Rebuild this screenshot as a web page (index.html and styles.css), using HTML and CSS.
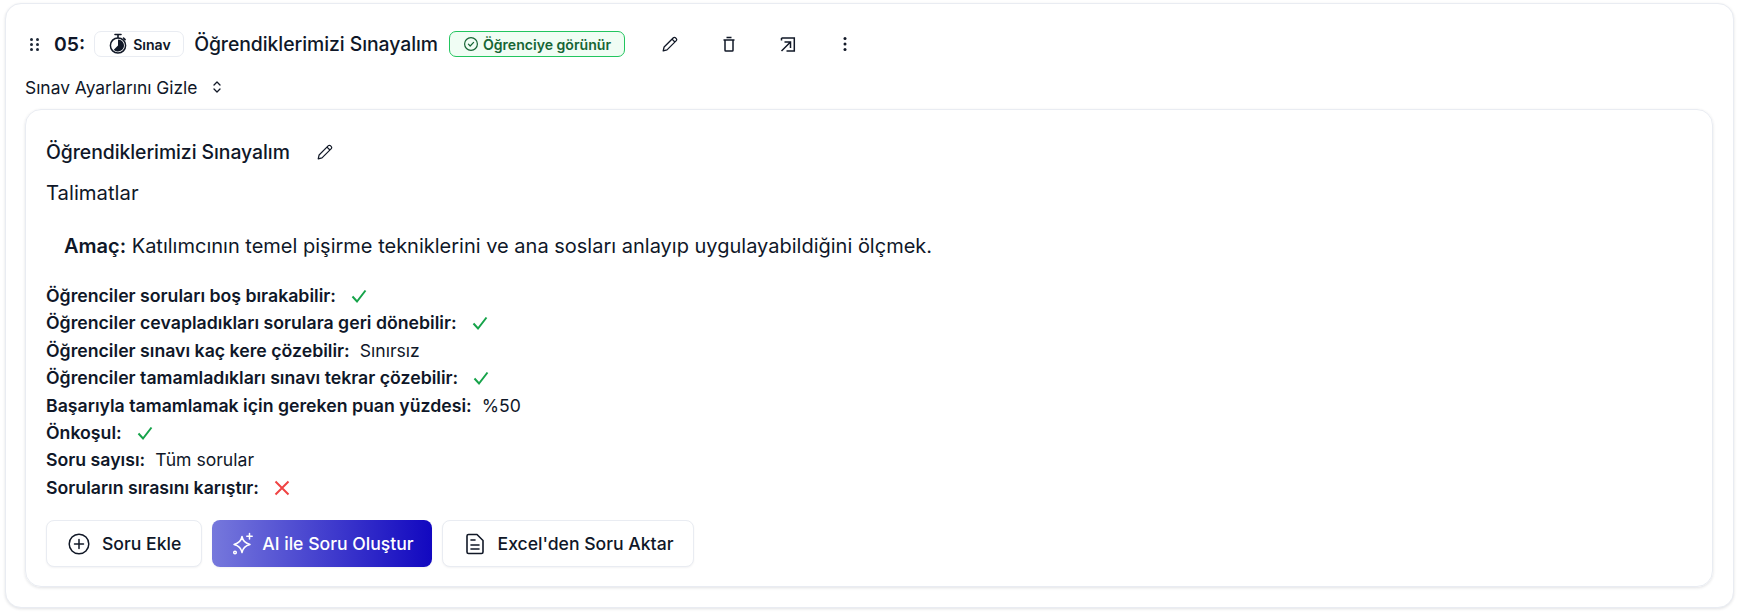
FILE: index.html
```html
<!DOCTYPE html>
<html lang="tr">
<head>
  <meta charset="UTF-8">
  <meta name="viewport" content="width=device-width, initial-scale=1.0">
  <title>Sınav</title>
  <link rel="stylesheet" href="styles.css">
</head>
<body>
  <section class="section-card">
    <div class="section-head">
      <svg class="drag" width="9" height="13" viewBox="0 0 9 13"><g fill="#1f2937"><circle cx="1.500" cy="1.500" r="1.500"/><circle cx="7.500" cy="1.500" r="1.500"/><circle cx="1.500" cy="6.500" r="1.500"/><circle cx="7.500" cy="6.500" r="1.500"/><circle cx="1.500" cy="11.500" r="1.500"/><circle cx="7.500" cy="11.500" r="1.500"/></g></svg>
      <span class="section-no">05:</span>
      <span class="type-badge">
        <svg width="20" height="22" viewBox="0 0 20 22"><path d="M7 1.500h6M10 1.500v3" stroke="#111827" stroke-width="1.600" fill="none" stroke-linecap="round"/><path d="M15.500 5l1.600 1.600" stroke="#111827" stroke-width="1.600" stroke-linecap="round"/><circle cx="10" cy="12.500" r="7.600" fill="none" stroke="#111827" stroke-width="1.500"/><path d="M10 12.500V6.500A6 6 0 1 1 5.800 16.800Z" fill="#111827"/></svg>
        Sınav
      </span>
      <h2 class="section-title">Öğrendiklerimizi Sınayalım</h2>
      <span class="visible-badge">
        <svg width="16" height="16" viewBox="0 0 16 16" fill="none" stroke="#166534" stroke-width="1.200" stroke-linecap="round" stroke-linejoin="round"><circle cx="8" cy="8" r="6.400"/><path d="M5.400 8.200l1.800 1.800 3.400-3.600"/></svg>
        Öğrenciye görünür
      </span>
      <div class="head-actions">
        <svg width="18" height="18" viewBox="0 0 18 18" fill="none" stroke="#111827" stroke-width="1.300" stroke-linejoin="round"><path d="M2.200 15.800l.9-3.800L12.400 2.700a1.400 1.400 0 0 1 2 0l.9.9a1.400 1.400 0 0 1 0 2L6 14.900z"/><path d="M11 4.100l2.900 2.900"/></svg>
        <svg width="18" height="18" viewBox="0 0 18 18" fill="none" stroke="#111827" stroke-width="1.500"><path d="M3.500 5h11M6.500 2.500h5"/><path d="M5 5v10.200c0 .5.3.8.8.8h6.400c.5 0 .8-.3.8-.8V5"/></svg>
        <svg width="18" height="18" viewBox="0 0 18 18" fill="none" stroke="#111827" stroke-width="1.500"><path d="M2.500 3h12.800v13H7.500"/><path d="M2.500 3v2.500M2.500 16l8.500-8.500M5.500 7h6v6"/></svg>
        <svg class="more" width="18" height="18" viewBox="0 0 18 18" fill="#111827"><circle cx="9" cy="3.500" r="1.500"/><circle cx="9" cy="9" r="1.500"/><circle cx="9" cy="14.500" r="1.500"/></svg>
      </div>
    </div>

    <div class="settings-toggle">
      Sınav Ayarlarını Gizle
      <svg width="12" height="14" viewBox="0 0 12 14" fill="none" stroke="#111827" stroke-width="1.300" stroke-linecap="round" stroke-linejoin="round"><path d="M3 5l3-3 3 3M3 9l3 3 3-3"/></svg>
    </div>

    <div class="settings-card">
      <div class="quiz-title">
        <h3>Öğrendiklerimizi Sınayalım</h3>
        <svg width="18" height="18" viewBox="0 0 18 18" fill="none" stroke="#111827" stroke-width="1.200" stroke-linejoin="round"><path d="M2.200 15.800l.9-3.800L12.400 2.700a1.400 1.400 0 0 1 2 0l.9.9a1.400 1.400 0 0 1 0 2L6 14.900z"/><path d="M11 4.100l2.900 2.900"/></svg>
      </div>
      <div class="instructions-label">Talimatlar</div>
      <p class="instructions"><strong>Amaç:</strong> Katılımcının temel pişirme tekniklerini ve ana sosları anlayıp uygulayabildiğini ölçmek.</p>

      <ul class="rules">
        <li><b>Öğrenciler soruları boş bırakabilir:</b><svg class="ok" width="18" height="18" viewBox="0 0 18 18"><path d="M2.500 9.500l4.500 5L15.500 3.500"/></svg></li>
        <li><b>Öğrenciler cevapladıkları sorulara geri dönebilir:</b><svg class="ok" width="18" height="18" viewBox="0 0 18 18"><path d="M2.500 9.500l4.500 5L15.500 3.500"/></svg></li>
        <li><b>Öğrenciler sınavı kaç kere çözebilir:</b><span>Sınırsız</span></li>
        <li><b>Öğrenciler tamamladıkları sınavı tekrar çözebilir:</b><svg class="ok" width="18" height="18" viewBox="0 0 18 18"><path d="M2.500 9.500l4.500 5L15.500 3.500"/></svg></li>
        <li><b>Başarıyla tamamlamak için gereken puan yüzdesi:</b><span>%50</span></li>
        <li><b>Önkoşul:</b><svg class="ok" width="18" height="18" viewBox="0 0 18 18"><path d="M2.500 9.500l4.500 5L15.500 3.500"/></svg></li>
        <li><b>Soru sayısı:</b><span>Tüm sorular</span></li>
        <li><b>Soruların sırasını karıştır:</b><svg class="no" width="18" height="18" viewBox="0 0 18 18"><path d="M2.500 2.500l13 13M15.500 2.500l-13 13"/></svg></li>
      </ul>

      <div class="actions">
        <button class="btn">
          <svg width="24" height="24" viewBox="0 0 24 24" fill="none" stroke="#111827" stroke-width="1.500" stroke-linecap="round"><circle cx="12" cy="12" r="9.800"/><path d="M12 7.500v9M7.500 12h9"/></svg>
          Soru Ekle
        </button>
        <button class="btn btn-ai">
          <svg width="22" height="24" viewBox="0 0 22 24" fill="none" stroke="#fff" stroke-width="1.500" stroke-linecap="round" stroke-linejoin="round"><path d="M10 4.500C10.800 9 13 11.200 18 12.500 13 13.800 10.800 16 10 20.500 9.200 16 7 13.800 2 12.500 7 11.200 9.200 9 10 4.500z"/><path d="M17.500 1.500v5.500M14.800 4.200h5.400"/><circle cx="3" cy="20.500" r="1.300"/></svg>
          AI ile Soru Oluştur
        </button>
        <button class="btn btn-excel">
          <svg width="20" height="24" viewBox="0 0 20 24" fill="none" stroke="#111827" stroke-width="1.600" stroke-linecap="round" stroke-linejoin="round"><path d="M3.500 2.500h8.500l6 6v11.500a1.500 1.500 0 0 1-1.500 1.500h-13a1.500 1.500 0 0 1-1.500-1.500v-16a1.500 1.500 0 0 1 1.500-1.500z"/><path d="M6 8h4M6 13h8M6 17h8"/></svg>
          Excel'den Soru Aktar
        </button>
      </div>
    </div>
  </section>
</body>
</html>
```

FILE: styles.css
```css
* {
  box-sizing: border-box;
}

html, body {
  height: 100%;
}

body {
  margin: 0;
  background-color: #fff;
  color: #0f1728;
  font-family: Inter, "Liberation Sans", sans-serif;
  overflow: hidden;
}

.section-card {
  margin: 3px 5px 0 5px;
  width: 1729px;
  height: 605px;
  padding: 27px 20px 0 19px;
  background-color: #fff;
  border: 1px solid #e9ecf2;
  border-radius: 16px;
  box-shadow: 0 1px 3px rgba(16, 24, 40, 0.12);
}

.section-head {
  display: flex;
  align-items: center;
  height: 26px;
  padding-left: 5px;
}

.drag {
  margin-right: 15px;
}

.section-no {
  font-size: 19.36px;
  font-weight: 600;
  margin-right: 9px;
}

.type-badge {
  display: inline-flex;
  align-items: center;
  gap: 5px;
  flex: none;
  width: 90px;
  height: 26px;
  padding-left: 13px;
  font-size: 14.08px;
  font-weight: 600;
  border: 1px solid #e9ecf2;
  border-radius: 7px;
  margin-right: 10px;
}

.section-title {
  margin: 0 11px 0 0;
  font-size: 19.36px;
  font-weight: 550;
  letter-spacing: -0.05px;
}

.visible-badge {
  display: inline-flex;
  align-items: center;
  gap: 4px;
  flex: none;
  width: 176px;
  height: 26px;
  padding-left: 13px;
  font-size: 14.08px;
  font-weight: 600;
  color: #166534;
  background-color: #f0fdf4;
  border: 1px solid #22c55e;
  border-radius: 7px;
}

.head-actions {
  display: flex;
  gap: 41px;
  margin-left: 36px;
}

.more {
  margin-left: -2px;
}

.settings-toggle {
  display: flex;
  align-items: center;
  gap: 14px;
  height: 24px;
  margin-top: 18px;
  font-size: 17.4px;
}

.settings-card {
  height: 478px;
  margin-top: 10px;
  padding: 28px 20px 0 20px;
  border: 1px solid #e9ecf2;
  border-radius: 16px;
  box-shadow: 0 1px 3px rgba(16, 24, 40, 0.12);
}

.quiz-title {
  display: flex;
  align-items: center;
  gap: 26px;
  height: 28px;
}

.quiz-title h3 {
  margin: 0;
  font-size: 19.36px;
  font-weight: 550;
  letter-spacing: -0.05px;
}

.instructions-label {
  margin-top: 14px;
  font-size: 20.3px;
  line-height: 26px;
}

.instructions {
  margin: 27px 0 0 18px;
  font-size: 20px;
  line-height: 26px;
}

.instructions strong {
  font-weight: 600;
}

.rules {
  list-style: none;
  margin: 23px 0 0 0;
  padding: 0;
  font-size: 17.6px;
  line-height: 27.4px;
}

.rules li {
  display: flex;
  align-items: center;
  gap: 10px;
}

.rules b {
  font-size: 17.7px;
  font-weight: 600;
}

.ok, .no {
  fill: none;
  stroke-width: 2;
  margin-left: 4px;
}

.ok {
  stroke: #16a34a;
}

.no {
  stroke: #ef4444;
}

.actions {
  display: flex;
  gap: 10px;
  margin-top: 19px;
}

.btn {
  display: inline-flex;
  align-items: center;
  gap: 11px;
  height: 47px;
  padding: 0 20px;
  font-family: inherit;
  font-size: 17.6px;
  font-weight: 500;
  color: #0f1728;
  background-color: #fff;
  border: 1px solid #e9ecf2;
  border-radius: 8px;
  box-shadow: 0 1px 2px rgba(16, 24, 40, 0.05);
}

.btn-ai {
  gap: 8px;
  padding-right: 18px;
  color: #fff;
  border: none;
  background: linear-gradient(90deg, #7678dc, #1208c0);
}

.btn-excel {
  gap: 13px;
  padding-left: 22px;
}
```
